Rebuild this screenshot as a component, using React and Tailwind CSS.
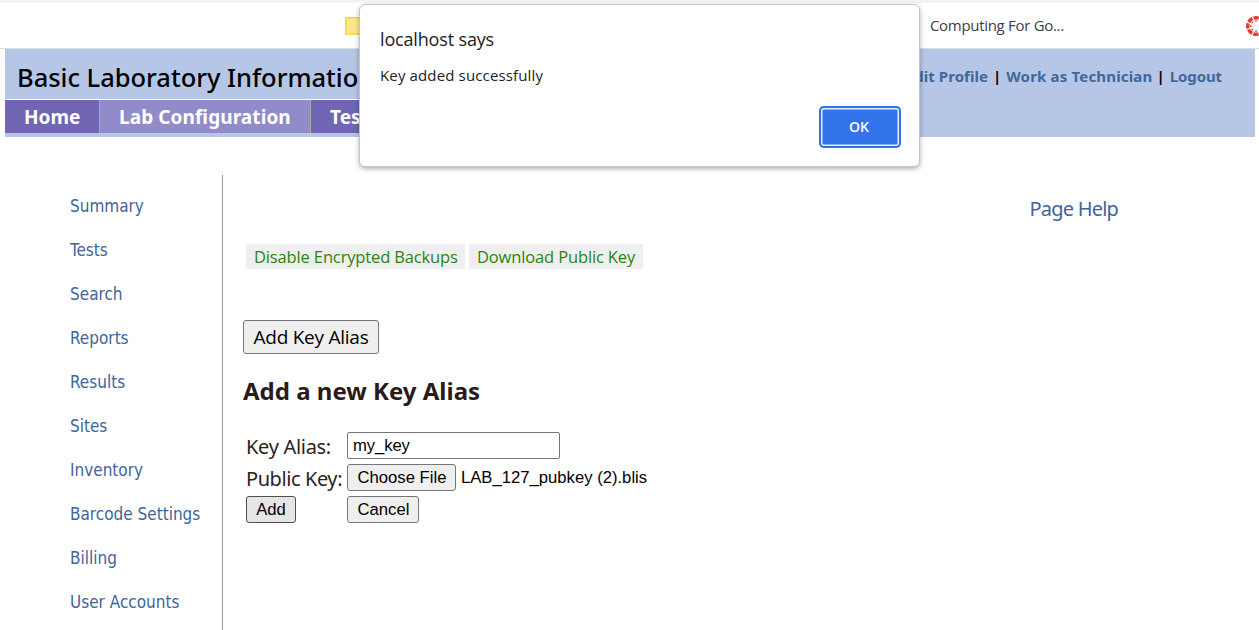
const sideLinks = [
  "Summary",
  "Tests",
  "Search",
  "Reports",
  "Results",
  "Sites",
  "Inventory",
  "Barcode Settings",
  "Billing",
  "User Accounts",
];

function BookmarksBar() {
  return (
    <div className="flex h-[49px] items-center border-t-[3px] border-b border-t-[#f1f3f4] border-b-[#dadce0] bg-white">
      <div className="ml-[345px] h-[18px] w-[18px] border border-[#f2d653] bg-[#fde68a] ring-1 ring-inset ring-[#f9dd66]" />
      <span className="ml-[567px] w-[316px] text-[15px] leading-none tracking-[-0.3px] whitespace-nowrap text-[#3c4043] font-['Open_Sans',sans-serif]">
        Computing For Go...
      </span>
      <svg className="h-[22px] w-[14px] shrink-0" viewBox="0 0 14 22">
        <circle cx="11" cy="11" r="8.3" fill="none" stroke="#e33b2e" strokeWidth="3.4" strokeDasharray="5.3 1.22" strokeDashoffset="2.65" />
        <g fill="#e33b2e">
          <circle cx="5.8" cy="11" r="0.9" />
          <circle cx="7.4" cy="7.4" r="0.9" />
          <circle cx="7.4" cy="14.6" r="0.9" />
          <circle cx="11" cy="5.8" r="0.9" />
          <circle cx="11" cy="16.2" r="0.9" />
        </g>
      </svg>
    </div>
  );
}

function Header() {
  return (
    <header className="mr-[4px] ml-[5px] h-[88px] bg-[#b6c6e6]">
      <div className="flex h-[50px] justify-between">
        <h1 className="pt-[15px] pl-[12px] text-[25.5px] leading-[26px] font-medium tracking-[-0.02px] whitespace-nowrap text-black font-['Noto_Sans',sans-serif]">
          Basic Laboratory Information
        </h1>
        <div className="flex gap-[5px] pt-[17px] pr-[33px] text-[15px] leading-[20px] font-bold whitespace-nowrap text-[#3f689b] font-['Noto_Sans',sans-serif]">
          <a className="tracking-[0.05px]">Edit Profile</a>
          <span className="text-black">|</span>
          <a className="tracking-[0.17px]">Work as Technician</a>
          <span className="-ml-px text-black">|</span>
          <a className="tracking-[-0.1px]">Logout</a>
        </div>
      </div>
      <nav className="flex h-[34px] w-[406px] border-t border-white text-[19px] leading-[34px] font-bold whitespace-nowrap text-white font-['Noto_Sans',sans-serif]">
        <a className="w-[95px] border-r border-[#a9a9a9] bg-[#7066b3] pl-[19px]">Home</a>
        <a className="w-[211px] border-r border-[#a9a9a9] bg-[#928bc9] pl-[19px] tracking-[0.08px]">Lab Configuration</a>
        <a className="w-[100px] bg-[#7066b3] pl-[19px]">Tests</a>
      </nav>
    </header>
  );
}

function AlertDialog() {
  return (
    <div
      role="alertdialog"
      className="absolute top-[4px] left-[359px] flex h-[163px] w-[561px] flex-col rounded-[6px] border border-[#c4c6c8] bg-white pt-[21px] pr-[18px] pl-[20px] text-[#202124] shadow-[0_2px_5px_rgba(0,0,0,0.3)] font-['Open_Sans',sans-serif]"
    >
      <div className="text-[18px] leading-[26px] tracking-[-0.16px]">localhost says</div>
      <div className="mt-[13px] text-[15px] leading-[20px] tracking-[0.14px]">Key added successfully</div>
      <button className="mt-[21px] h-[42px] w-[82px] self-end rounded-[5px] bg-[#3273ea] pr-[2px] pb-[2px] text-[14px] font-semibold text-white [box-shadow:inset_0_0_0_2px_#3273ea,inset_0_0_0_3.5px_#e3edfe]">
        OK
      </button>
    </div>
  );
}

const control = "rounded-[3px] border border-[#767676] bg-[#efefef] text-black";

function KeyForm() {
  return (
    <form className="mt-[25px] ml-[3px] grid grid-cols-[101px_auto] grid-rows-[27px_27px_27px] justify-start gap-y-[5px] text-[16.67px] text-black font-['Liberation_Sans',sans-serif]">
      <label className="pt-px text-[20px] leading-[27px] tracking-[-0.3px] text-[#2b2320] font-['Noto_Sans',sans-serif]">Key Alias:</label>
      <div className="flex w-[213px] items-center rounded-[2px] border border-[#767676] bg-white pl-[5px] tracking-[-0.1px]">my_key</div>
      <label className="pt-px text-[20px] leading-[27px] tracking-[-0.42px] text-[#2b2320] font-['Noto_Sans',sans-serif]">Public Key:</label>
      <div className="flex items-center whitespace-nowrap">
        <button type="button" className={control + " h-[27px] w-[109px] pl-px"}>Choose File</button>
        <span className="ml-[5px]">LAB_127_pubkey (2).blis</span>
      </div>
      <button type="button" className="w-[50px] rounded-[3px] border border-[#4f4f4f] bg-[#e5e5e5] text-black">Add</button>
      <button type="button" className={control + " w-[72px] pl-px"}>Cancel</button>
    </form>
  );
}

export default function App() {
  return (
    <div className="relative h-[630px] w-[1259px] overflow-hidden bg-white">
      <BookmarksBar />
      <Header />
      <div className="mt-[38px] flex h-[455px]">
        <aside className="flex w-[223px] flex-col border-r border-[#999999] pt-[9px] pl-[70px] text-[17px] leading-[44px] text-[#41659a] font-['DejaVu_Sans_Condensed',sans-serif]">
          {sideLinks.map((label) => (
            <a key={label} className="flex h-[44px] shrink-0 items-center leading-none whitespace-nowrap">
              {label}
            </a>
          ))}
        </aside>
        <main className="flex-1 pl-[20px]">
          <div className="flex h-[69px] justify-end pt-[20px] pr-[141px] text-[20px] leading-[28px] tracking-[-0.8px] text-[#41659a] font-['Noto_Sans',sans-serif]">
            Page Help
          </div>
          <div className="ml-[3px] flex gap-[4px] text-[16.5px] leading-[26px] tracking-[-0.14px] whitespace-nowrap text-[#2a850d] font-['Open_Sans',sans-serif]">
            <a className="h-[25px] w-[219px] bg-[#efefef] pl-[8px]">Disable Encrypted Backups</a>
            <a className="h-[25px] w-[174px] bg-[#efefef] pl-[8px]">Download Public Key</a>
          </div>
          <button className={control + " mt-[51px] block h-[34px] w-[136px] text-[19px] tracking-[-0.25px] whitespace-nowrap font-['Open_Sans',sans-serif]"}>
            Add Key Alias
          </button>
          <h2 className="mt-[21px] text-[24px] leading-[31px] font-bold text-[#2b1a17] font-['Noto_Sans',sans-serif]">
            Add a new Key Alias
          </h2>
          <div className="pt-px">
            <KeyForm />
          </div>
        </main>
      </div>
      <AlertDialog />
    </div>
  );
}
